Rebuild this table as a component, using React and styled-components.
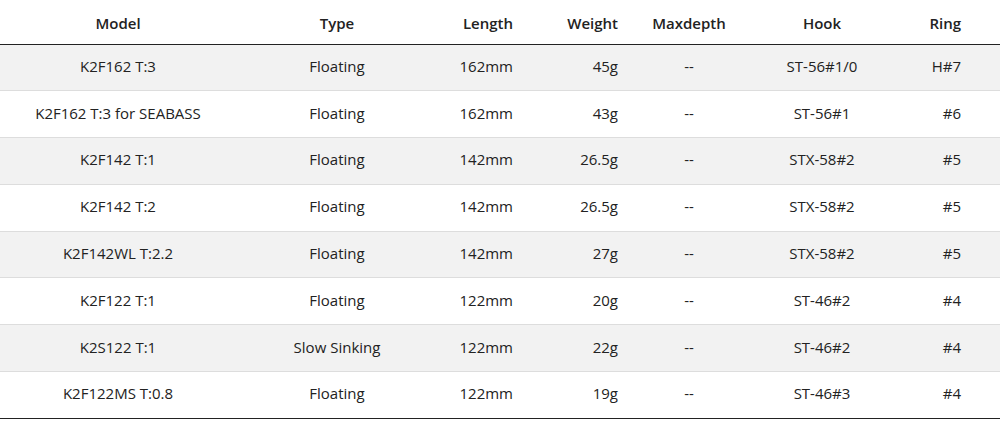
import React from 'react';
import styled, { createGlobalStyle } from 'styled-components';

const GlobalStyle = createGlobalStyle`
  body {
    margin: 0;
    background: #fff;
    font-family: "Open Sans", "Noto Sans", sans-serif;
    color: #222;
  }
`;

const Table = styled.table`
  width: 1000px;
  border-collapse: collapse;
  table-layout: fixed;
  font-size: 15px;
  border-bottom: 1px solid #222;
`;

const HeadCell = styled.th`
  height: 44px;
  box-sizing: border-box;
  padding: 3px ${p => p.$pr || 10}px 0 10px;
  text-align: ${p => p.$align || 'center'};
  font-weight: 600;
  border-bottom: 1px solid #222;
  vertical-align: middle;
`;

const Row = styled.tr`
  background: ${p => (p.$striped ? '#f2f2f2' : '#fff')};
  border-bottom: 1px solid #dddddd;

  &:last-child {
    border-bottom: none;
  }
`;

const Cell = styled.td`
  height: 46.8px;
  box-sizing: border-box;
  padding: 0 ${p => p.$pr || 10}px 3px 10px;
  text-align: ${p => p.$align || 'center'};
  vertical-align: middle;
  white-space: nowrap;
`;

const columns = [
  { key: 'model', label: 'Model', width: 236 },
  { key: 'type', label: 'Type', width: 202 },
  { key: 'length', label: 'Length', width: 85, align: 'right' },
  { key: 'weight', label: 'Weight', width: 105, align: 'right' },
  { key: 'depth', label: 'Maxdepth', width: 122 },
  { key: 'hook', label: 'Hook', width: 144 },
  { key: 'ring', label: 'Ring', width: 106, align: 'right', pr: 39 },
];

const lures = [
  ['K2F162 T:3', 'Floating', '162mm', '45g', '--', 'ST-56#1/0', 'H#7'],
  ['K2F162 T:3 for SEABASS', 'Floating', '162mm', '43g', '--', 'ST-56#1', '#6'],
  ['K2F142 T:1', 'Floating', '142mm', '26.5g', '--', 'STX-58#2', '#5'],
  ['K2F142 T:2', 'Floating', '142mm', '26.5g', '--', 'STX-58#2', '#5'],
  ['K2F142WL T:2.2', 'Floating', '142mm', '27g', '--', 'STX-58#2', '#5'],
  ['K2F122 T:1', 'Floating', '122mm', '20g', '--', 'ST-46#2', '#4'],
  ['K2S122 T:1', 'Slow Sinking', '122mm', '22g', '--', 'ST-46#2', '#4'],
  ['K2F122MS T:0.8', 'Floating', '122mm', '19g', '--', 'ST-46#3', '#4'],
];

const App = () => (
  <>
    <GlobalStyle />
    <Table>
      <colgroup>
        {columns.map(c => (
          <col key={c.key} style={{ width: c.width }} />
        ))}
      </colgroup>
      <thead>
        <tr>
          {columns.map(c => (
            <HeadCell key={c.key} $align={c.align} $pr={c.pr}>
              {c.label}
            </HeadCell>
          ))}
        </tr>
      </thead>
      <tbody>
        {lures.map((row, i) => (
          <Row key={row[0]} $striped={i % 2 === 0}>
            {row.map((value, j) => (
              <Cell key={columns[j].key} $align={columns[j].align} $pr={columns[j].pr}>
                {value}
              </Cell>
            ))}
          </Row>
        ))}
      </tbody>
    </Table>
  </>
);

export default App;
